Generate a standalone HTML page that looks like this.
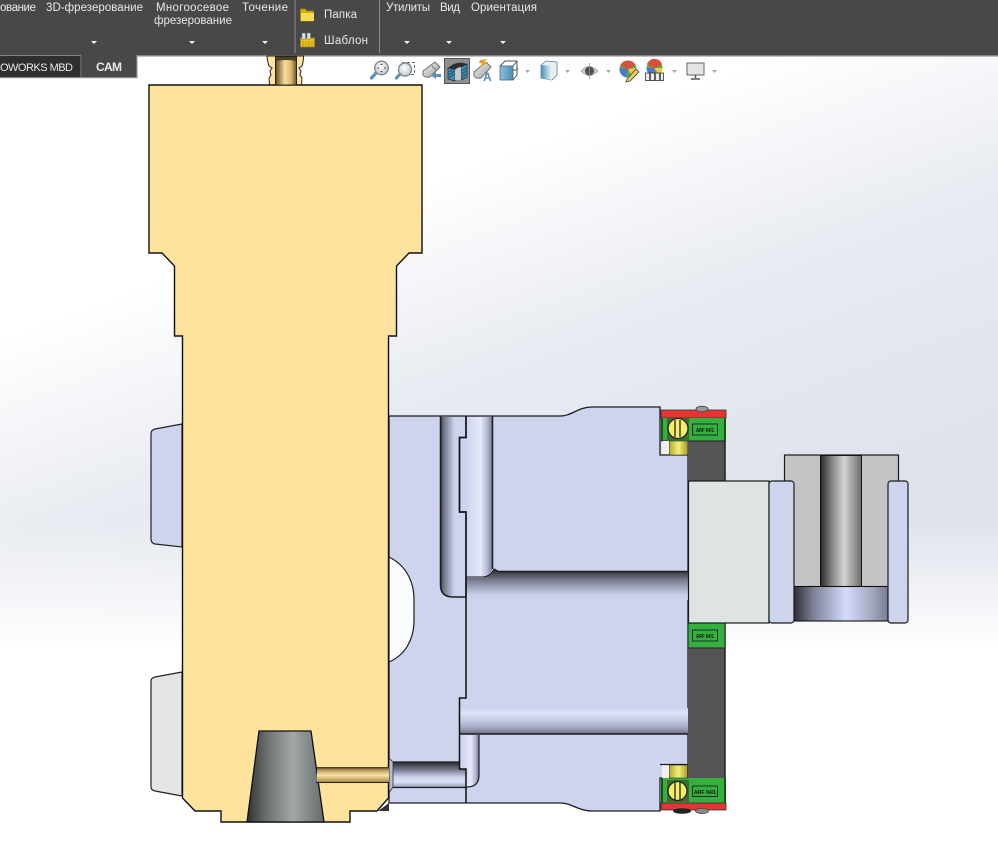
<!DOCTYPE html>
<html lang="ru">
<head>
<meta charset="utf-8">
<title>CAM</title>
<style>
html,body{margin:0;padding:0;width:998px;height:849px;overflow:hidden;background:#fff}
#bg{position:absolute;left:0;top:0;width:998px;height:849px;
background:
linear-gradient(to bottom,rgba(255,255,255,0) 520px,#fff 650px),
linear-gradient(160deg,#fff 28%,#e8ebf1 45%,#dfe3ec 65%);}
svg{position:absolute;left:0;top:0;display:block}
text{font-family:"Liberation Sans",sans-serif}
</style>
</head>
<body>
<div id="bg"></div>
<svg width="998" height="849" viewBox="0 0 998 849" xmlns="http://www.w3.org/2000/svg">
<defs>
<linearGradient id="cone" x1="0" x2="1" y1="0" y2="0"><stop offset="0" stop-color="#303232"/><stop offset=".25" stop-color="#6a6f70"/><stop offset=".6" stop-color="#a3a8a9"/><stop offset="1" stop-color="#656a6b"/></linearGradient>
<linearGradient id="goldV" x1="0" x2="0" y1="0" y2="1"><stop offset="0" stop-color="#3a2c10"/><stop offset=".2" stop-color="#b8975a"/><stop offset=".55" stop-color="#fbe5a8"/><stop offset="1" stop-color="#a98a48"/></linearGradient>
<linearGradient id="goldH" x1="0" x2="1" y1="0" y2="0"><stop offset="0" stop-color="#5e4820"/><stop offset=".45" stop-color="#f8dfa0"/><stop offset=".75" stop-color="#d8b56d"/><stop offset="1" stop-color="#6a5226"/></linearGradient>
<linearGradient id="ch1" x1="0" x2="1" y1="0" y2="0"><stop offset="0" stop-color="#3e404c"/><stop offset=".15" stop-color="#777a8e"/><stop offset=".55" stop-color="#ced3ee"/><stop offset="1" stop-color="#ced3ee"/></linearGradient>
<linearGradient id="ch2" x1="0" x2="1" y1="0" y2="0"><stop offset="0" stop-color="#ced3ee"/><stop offset=".55" stop-color="#e6eafb"/><stop offset=".8" stop-color="#b4b8d4"/><stop offset="1" stop-color="#777a90"/></linearGradient>
<linearGradient id="bar1" x1="0" x2="0" y1="0" y2="1"><stop offset="0" stop-color="#2c2d36"/><stop offset=".35" stop-color="#7b7e92"/><stop offset=".8" stop-color="#c6cbe6"/><stop offset="1" stop-color="#ced3ee"/></linearGradient>
<linearGradient id="bar2" x1="0" x2="0" y1="0" y2="1"><stop offset="0" stop-color="#ced3ee"/><stop offset=".2" stop-color="#dfe3f8"/><stop offset=".7" stop-color="#aeb2ce"/><stop offset="1" stop-color="#6f7288"/></linearGradient>
<linearGradient id="bar3" x1="0" x2="0" y1="0" y2="1"><stop offset="0" stop-color="#26272e"/><stop offset=".3" stop-color="#74778a"/><stop offset=".6" stop-color="#ccd1ec"/><stop offset=".8" stop-color="#dde1f6"/><stop offset="1" stop-color="#9a9db4"/></linearGradient>
<linearGradient id="cyl" x1="0" x2="1" y1="0" y2="0"><stop offset="0" stop-color="#2a2a2a"/><stop offset=".3" stop-color="#8a8a8a"/><stop offset=".58" stop-color="#d4d4d4"/><stop offset="1" stop-color="#6c6c6c"/></linearGradient>
<linearGradient id="cb" x1="0" x2="1" y1="0" y2="0"><stop offset="0" stop-color="#2c2d36"/><stop offset=".2" stop-color="#7c7f94"/><stop offset=".55" stop-color="#d4dcfb"/><stop offset=".85" stop-color="#a0a4bc"/><stop offset="1" stop-color="#787b90"/></linearGradient>
<linearGradient id="yel" x1="0" x2="1" y1="0" y2="0"><stop offset="0" stop-color="#b5ad2a"/><stop offset=".5" stop-color="#f8f07a"/><stop offset="1" stop-color="#a8a024"/></linearGradient>
<radialGradient id="lens" cx=".45" cy=".4" r=".7"><stop offset="0" stop-color="#fff"/><stop offset="1" stop-color="#b8bec4"/></radialGradient>
<linearGradient id="cube" x1="0" x2="1" y1="0" y2="0"><stop offset="0" stop-color="#8fc0dd"/><stop offset="1" stop-color="#4d8cb3"/></linearGradient>
<linearGradient id="cube2" x1="0" x2="1" y1="0" y2="0"><stop offset="0" stop-color="#4d8cb3"/><stop offset=".6" stop-color="#a8d0e4"/><stop offset="1" stop-color="#eef4f7"/></linearGradient>
<linearGradient id="torch" x1="0" x2="1" y1="0" y2="1"><stop offset="0" stop-color="#f4f4f4"/><stop offset="1" stop-color="#9a9c9e"/></linearGradient>
</defs>

<!-- toolbar -->
<rect x="0" y="0" width="998" height="55" fill="#484848"/>
<rect x="0" y="55" width="998" height="1.5" fill="#858585"/>
<rect x="0" y="56" width="81" height="21" fill="#2f2f2f"/>
<rect x="81" y="55" width="56" height="22" fill="#484848"/>
<rect x="0" y="77" width="137" height="1.2" fill="#8a8a8a"/>
<rect x="136.3" y="55" width="1.2" height="23" fill="#8a8a8a"/>
<rect x="80.3" y="56" width="1" height="21" fill="#777"/>
<g fill="#e8e8e8" font-size="11.5">
<text x="0" y="11" textLength="36" lengthAdjust="spacing">ование</text>
<text x="46" y="11" textLength="97" lengthAdjust="spacing">3D-фрезерование</text>
<text x="156" y="11" textLength="73" lengthAdjust="spacing">Многоосевое</text>
<text x="154" y="24" textLength="78" lengthAdjust="spacing">фрезерование</text>
<text x="242" y="11" textLength="46" lengthAdjust="spacing">Точение</text>
<text x="324" y="18" textLength="33" lengthAdjust="spacing">Папка</text>
<text x="324" y="44" textLength="44" lengthAdjust="spacing">Шаблон</text>
<text x="386" y="11" textLength="44" lengthAdjust="spacing">Утилиты</text>
<text x="440" y="11" textLength="20" lengthAdjust="spacing">Вид</text>
<text x="471" y="11" textLength="66" lengthAdjust="spacing">Ориентация</text>
<text x="0" y="71" font-size="11" textLength="73" lengthAdjust="spacing">OWORKS MBD</text>
<text x="96" y="71" font-size="12" font-weight="bold" textLength="26" lengthAdjust="spacing">CAM</text>
</g>
<g fill="#f0f0f0">
<path d="M91,41h6l-3,3z"/><path d="M189,41h6l-3,3z"/><path d="M262,41h6l-3,3z"/>
<path d="M404,41h6l-3,3z"/><path d="M446,41h6l-3,3z"/><path d="M500,41h6l-3,3z"/>
</g>
<rect x="294.500" y="0" width="1" height="53" fill="#8c8c8c"/>
<rect x="379" y="0" width="1" height="53" fill="#8c8c8c"/>
<!-- folder icons -->
<path d="M300.500,9h5l1,2h7v10h-13z" fill="#d8ac14" stroke="#a88410" stroke-width=".7"/>
<rect x="301" y="13" width="13" height="8" fill="#f8dc50"/>
<path d="M300.500,38h14v9h-14z" fill="#e8c020" stroke="#a88410" stroke-width=".7"/>
<rect x="302" y="33" width="3.500" height="6" fill="#dfe6ea" stroke="#5a6a70" stroke-width=".5"/>
<rect x="307" y="33" width="3.500" height="6" fill="#dfe6ea" stroke="#5a6a70" stroke-width=".5"/>
<path d="M303,41v6M306,41v6M309,41v6M312,41v6" stroke="#a88410" stroke-width=".6"/>

<!-- left tabs -->
<path d="M182,424L155,429Q151,430 151,434V539Q151,543 155,544L182,547Z" fill="#ced3ee" stroke="#222" stroke-width="1.200"/>
<path d="M182,672L155,677Q151,678 151,681V787Q151,790 155,791L182,796Z" fill="#e3e5e2" stroke="#222" stroke-width="1.200"/>

<!-- lavender block -->
<path d="M389,416H560C572,416 578,407 592,407H660V455H688V778H660V811H592C578,811 572,803 560,803H389Z" fill="#ced3ee" stroke="#1c1c1c" stroke-width="1.300"/>
<!-- hole -->
<path d="M389,557C405,565 414,580 414,600V620C414,640 405,655 389,662Z" fill="#fbfcfd" stroke="#1c1c1c" stroke-width="1.200"/>
<!-- upper channels -->
<path d="M440.500,417H466V597H453Q440.500,597 440.500,585Z" fill="url(#ch1)"/>
<path d="M466,417H492.500V567Q492,574 485,576H466Z" fill="url(#ch2)"/>
<path d="M440.500,416.500V585Q440.500,597 453,597H466M492.500,416.500V569" fill="none" stroke="#1c1c1c" stroke-width="1.500"/>
<path d="M466,578H482Q490,577 494,570L499,572H688V600H466Z" fill="url(#bar1)"/>
<path d="M494,569L498,571.500H688" fill="none" stroke="#1c1c1c" stroke-width="1.500"/>
<path d="M466,577H482Q490,577 494,569" fill="none" stroke="#1c1c1c" stroke-width="1"/>
<!-- lower bar -->
<path d="M459,708H688V734H459Z" fill="url(#bar2)"/>
<path d="M459,734H688" stroke="#1c1c1c" stroke-width="1.500"/>
<!-- lower channels -->
<path d="M461,735H479V775Q479,787 467,787H461Z" fill="url(#ch2)"/>
<path d="M479,735V775Q479,787 467,787" fill="none" stroke="#1c1c1c" stroke-width="1.200"/>
<path d="M393,762H459V769H466V787H393Z" fill="url(#bar3)"/>
<path d="M389,758L393,762V787L389,793Z" fill="#b7bbd4" stroke="#333" stroke-width=".8"/>
<path d="M393,762H459M393,787.500H467" stroke="#1c1c1c" stroke-width="1.300" fill="none"/>
<!-- stepped line -->
<path d="M466,416V437.500H459.500V512H466V598" fill="none" stroke="#111" stroke-width="1.700"/>
<path d="M466,598V698H459.500V769H466V803" fill="none" stroke="#111" stroke-width="1.500"/>
<path d="M389,803L378,811H389Z" fill="#333"/>

<!-- plate -->
<rect x="688" y="441" width="37" height="40" fill="#555"/>
<rect x="688" y="648" width="37" height="130" fill="#555"/>
<path d="M725,410V810" stroke="#222" stroke-width="1.500"/>
<!-- top green block -->
<rect x="661" y="410" width="65" height="8" fill="#e53434" stroke="#333" stroke-width=".8"/>
<rect x="661" y="418" width="65" height="23" fill="#35b03c"/>
<path d="M662,418V441M725,418V441" stroke="#0d5a12" stroke-width="2"/>
<path d="M661,441H726" stroke="#222" stroke-width="1"/>
<rect x="667" y="418" width="22" height="22" fill="#3f6b32"/>
<circle cx="678" cy="428.500" r="10" fill="#f4ee6a" stroke="#222" stroke-width="1.300"/>
<path d="M675,420V437M680,420V437" stroke="#222" stroke-width="1.300"/>
<rect x="692.500" y="424" width="25" height="11" fill="#35b03c" stroke="#123" stroke-width=".9"/>
<text x="696" y="432" font-size="5.500" font-weight="bold" fill="#111" textLength="18" lengthAdjust="spacingAndGlyphs">ARF 04/1</text>
<rect x="662" y="441" width="7" height="13" fill="#f0f0f0"/>
<rect x="669.500" y="441" width="18" height="14" fill="url(#yel)" stroke="#333" stroke-width=".6"/>
<ellipse cx="702" cy="409" rx="6" ry="2.800" fill="#999" stroke="#444" stroke-width=".8"/>
<!-- mid green -->
<rect x="688" y="623" width="37" height="25" fill="#35b03c" stroke="#222" stroke-width="1"/>
<rect x="692.500" y="630" width="25" height="11" fill="#35b03c" stroke="#123" stroke-width=".9"/>
<text x="696" y="638" font-size="5.500" font-weight="bold" fill="#111" textLength="18" lengthAdjust="spacingAndGlyphs">ARF 04/1</text>
<!-- bottom green block -->
<rect x="661" y="778" width="65" height="25" fill="#35b03c"/>
<path d="M662,778V803M725,778V803" stroke="#0d5a12" stroke-width="2"/>
<rect x="661" y="803" width="65" height="7" fill="#e53434" stroke="#333" stroke-width=".8"/>
<rect x="667" y="780" width="22" height="22" fill="#3f6b32"/>
<circle cx="677.500" cy="791" r="9.500" fill="#f4ee6a" stroke="#222" stroke-width="1.300"/>
<path d="M675,782V800M680,782V800" stroke="#222" stroke-width="1.300"/>
<rect x="692.500" y="786" width="25" height="10.500" fill="#35b03c" stroke="#123" stroke-width=".9"/>
<text x="694" y="794" font-size="5.500" font-weight="bold" fill="#111" textLength="22" lengthAdjust="spacingAndGlyphs">ARF 04/1</text>
<rect x="662" y="765" width="7" height="13" fill="#f0f0f0"/>
<rect x="669.500" y="765" width="18" height="13" fill="url(#yel)" stroke="#333" stroke-width=".6"/>
<path d="M660,764.500H688" stroke="#1c1c1c" stroke-width="1.300"/>
<ellipse cx="682" cy="811" rx="9" ry="2.800" fill="#222"/>
<ellipse cx="702" cy="811" rx="6.500" ry="2.600" fill="#8a8a8a" stroke="#444" stroke-width=".7"/>

<!-- right assembly -->
<rect x="784.500" y="455" width="114" height="132" fill="#c4c4c4" stroke="#1a1a1a" stroke-width="1.200"/>
<rect x="820.500" y="455.500" width="41" height="131" fill="url(#cyl)" stroke="#111" stroke-width="1"/>
<rect x="794" y="586.500" width="94" height="34.500" fill="url(#cb)" stroke="#111" stroke-width="1.100"/>
<rect x="688.500" y="481" width="80.500" height="142" fill="#dfe3e4" stroke="#1a1a1a" stroke-width="1.200"/>
<rect x="769" y="481" width="25" height="142" rx="3" fill="#ced3ee" stroke="#1a1a1a" stroke-width="1.200"/>
<rect x="888" y="481" width="20" height="142" rx="3" fill="#ced3ee" stroke="#1a1a1a" stroke-width="1.200"/>

<!-- main body -->
<path d="M267,56C267,60 268,63 269,66L272,68L270,71L271,75L269,78L269.500,85H301.500L302,78L300,75L301,71L299,68L302,66C303,63 303.500,60 303.500,56Z" fill="#fde39c" stroke="#222" stroke-width="1"/>
<path d="M149,85H422V253H409L396.500,266V336H388.500V798L377,811H350V822H221V811H195L182.500,798V336H174.500V266L162,253H149Z" fill="#fde39c" stroke="#111" stroke-width="1.400"/>
<rect x="275.500" y="57" width="21" height="28" fill="url(#goldH)" stroke="#222" stroke-width="1"/>
<path d="M276,57H296V61Q286,59 276,61Z" fill="#4e3f25"/>
<path d="M259,731H311L324,822H247Z" fill="url(#cone)" stroke="#111" stroke-width="1.300"/>
<rect x="317" y="767" width="72" height="15" fill="url(#goldV)"/>
<path d="M316,782.500H389" stroke="#222" stroke-width="1"/>

<!-- view toolbar icons -->
<g>
<!-- zoom to fit -->
<path d="M376,73L371.500,78" stroke="#5b94b8" stroke-width="3.200" stroke-linecap="round"/>
<circle cx="381.500" cy="68" r="6.800" fill="url(#lens)" stroke="#808a90" stroke-width="1.400"/>
<path d="M381.500,63.500l-1.500,1.500h3zM381.500,72.500l-1.500,-1.500h3zM377,68l1.500,-1.500v3zM386,68l-1.500,-1.500v3z" fill="#555"/>
<!-- zoom area -->
<rect x="402" y="62.500" width="12.500" height="12" fill="none" stroke="#666" stroke-width="1" stroke-dasharray="3 2"/>
<path d="M400,74L396.500,78" stroke="#5b94b8" stroke-width="3.200" stroke-linecap="round"/>
<circle cx="405" cy="69.500" r="6.500" fill="url(#lens)" stroke="#808a90" stroke-width="1.400"/>
<!-- previous view -->
<path d="M423,71L435,62L440,67L430,77Q425,78 423,75Z" fill="url(#torch)" stroke="#6c6e70" stroke-width="1"/>
<path d="M432,66l4,4" stroke="#777" stroke-width="1"/>
<path d="M431,75.500l5,-3.500v2h5v3h-5v2z" fill="#5b94b8"/>
<!-- section view selected -->
<rect x="444.500" y="58.500" width="25" height="25" fill="#8f8f8f" stroke="#555" stroke-width="1"/>
<path d="M448,68Q457,60 467,64V68Q458,66 454,70Z" fill="#2e2e2e"/>
<path d="M448,68L455,69V81L448,79Z" fill="#3e8fb4" stroke="#16323f" stroke-width=".8"/>
<path d="M461,67L467,64V77L461,80Z" fill="#3e8fb4" stroke="#16323f" stroke-width=".8"/>
<path d="M455,70Q458,67 461,67V80H455Z" fill="#c4c8ca"/>
<path d="M449,72l4,-3M449,75l5,-4M449,78l5,-4M462,71l4,-3M462,74l4,-3M462,77l4,-3" stroke="#16323f" stroke-width=".7"/>
<!-- dynamic annotation -->
<path d="M474,72L486,62L491,67L481,78Q476,79 474,76Z" fill="url(#torch)" stroke="#6c6e70" stroke-width="1"/>
<path d="M480,60l7,-1l-3,3l4,0l-8,6l2,-5l-3,0z" fill="#e8a020"/>
<text x="483" y="81" font-size="12" font-weight="bold" fill="#4c8db8">A</text>
<!-- display cube -->
<rect x="500" y="66" width="13" height="14" fill="url(#cube)" stroke="#3e6d8c" stroke-width=".8"/>
<path d="M500,66L505,61H517V75L513,80M513,66L517,61" fill="none" stroke="#555" stroke-width="1"/>
<path d="M512,70h4l2,-2" stroke="#555" stroke-width="1" fill="none"/>
<path d="M525,70h5l-2.500,3z" fill="#a8a8a8"/>
<!-- shaded cube -->
<path d="M541,65L546,61L557,62V75L552,80L541,78Z" fill="#e8eef2" stroke="#5f7f95" stroke-width=".8"/>
<path d="M541,65L552,66V80L541,78Z" fill="url(#cube2)"/>
<path d="M565,70h5l-2.500,3z" fill="#a8a8a8"/>
<!-- eye -->
<path d="M581,71Q589,62 598,71Q589,80 581,71Z" fill="#c6c8c8" stroke="#aaa" stroke-width=".8"/>
<circle cx="589.500" cy="71" r="4.500" fill="#505050"/>
<path d="M589.500,63V79" stroke="#999" stroke-width=".8"/>
<path d="M606,70h5l-2.500,3z" fill="#a8a8a8"/>
<!-- appearance ball -->
<circle cx="628" cy="69" r="8.500" fill="#5aa84a"/>
<path d="M620.500,65A8.500,8.500 0 0 1 635.500,65L628,70Z" fill="#d85040"/>
<path d="M628,69L619.500,68A8.500,8.500 0 0 0 626,77.500Z" fill="#4a7ad0"/>
<path d="M628,69L636.500,68A8.500,8.500 0 0 1 632,76.500Z" fill="#e8d040"/>
<path d="M627,79L636,69L639,72L630,81L626,82Z" fill="#e8c860" stroke="#444" stroke-width=".8"/>
<!-- scene ball -->
<circle cx="654.500" cy="68" r="8" fill="#5aa84a"/>
<path d="M647,64A8,8 0 0 1 662,64L654.500,69Z" fill="#d85040"/>
<path d="M654.500,68L646.500,68A8,8 0 0 0 654.500,76Z" fill="#4a7ad0"/>
<path d="M654.500,68L662.500,68A8,8 0 0 1 658.500,75Z" fill="#e8d040"/>
<rect x="645.500" y="73" width="18" height="7.500" fill="#eee" stroke="#333" stroke-width=".8"/>
<path d="M650,73V80.500M655,73V80.500M660,73V80.500" stroke="#333" stroke-width="1.500"/>
<path d="M672,70h5l-2.500,3z" fill="#a8a8a8"/>
<!-- monitor -->
<rect x="687" y="63" width="17" height="12" fill="#e4e4e4" stroke="#666" stroke-width="1"/>
<path d="M695.500,75V78M691,79H700" stroke="#555" stroke-width="1.500"/>
<path d="M712,70h5l-2.500,3z" fill="#a8a8a8"/>
</g>
</svg>
</body>
</html>
